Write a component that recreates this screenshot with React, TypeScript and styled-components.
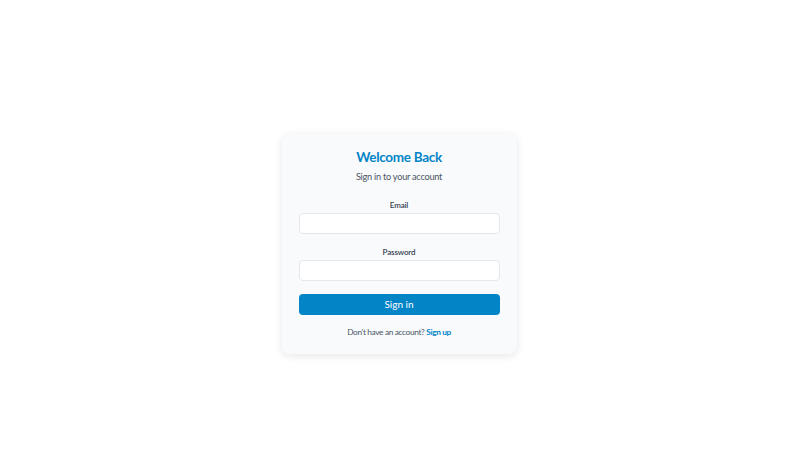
import styled, { createGlobalStyle } from 'styled-components'

const GlobalStyle = createGlobalStyle`
  * {
    box-sizing: border-box;
  }
  body {
    margin: 0;
    background: #ffffff;
    font-family: Lato, 'Open Sans', sans-serif;
    color: #374151;
  }
`

const Page = styled.div`
  min-height: 100vh;
  padding: 17px 24px 16px 16px;
  box-sizing: content-box;
  display: flex;
  align-items: center;
  justify-content: center;
`

const Card = styled.div`
  width: 235px;
  padding: 15px 17px 16px;
  background: #f8fafc;
  border-radius: 8px;
  box-shadow: 0 2px 8px rgba(15, 23, 42, 0.1);
  text-align: center;
`

const Title = styled.h1`
  margin: 0;
  font-size: 13.5px;
  line-height: 17px;
  font-weight: 700;
  letter-spacing: -0.3px;
  color: #0284c7;
`

const Subtitle = styled.p`
  margin: 5px 0 0;
  font-size: 9.2px;
  line-height: 12px;
  letter-spacing: -0.25px;
  color: #4b5563;
`

const Form = styled.form`
  margin-top: 17px;
  display: flex;
  flex-direction: column;
`

const Field = styled.div`
  display: flex;
  flex-direction: column;
  gap: 3px;
  margin-bottom: 13px;
`

const Label = styled.label`
  font-size: 8px;
  line-height: 10px;
  font-weight: 600;
  letter-spacing: -0.15px;
  color: #374151;
`

const Input = styled.input`
  height: 21px;
  width: 100%;
  border: 1px solid #e5e7eb;
  border-radius: 4px;
  background: #ffffff;
  font-family: inherit;
  font-size: 9px;
  padding: 0 8px;
  outline: none;
`

const Button = styled.button`
  height: 21.5px;
  width: 100%;
  border: none;
  border-radius: 4px;
  background: #0284c7;
  color: #ffffff;
  font-family: inherit;
  font-size: 10px;
  cursor: pointer;
`

const Footer = styled.p`
  margin: 11.5px 0 0;
  font-size: 8.3px;
  line-height: 11px;
  letter-spacing: -0.35px;
  color: #4b5563;
`

const FooterLink = styled.a`
  color: #0284c7;
  font-weight: 700;
  text-decoration: none;
`

export default function App() {
  return (
    <>
      <GlobalStyle />
      <Page>
        <Card>
          <Title>Welcome Back</Title>
          <Subtitle>Sign in to your account</Subtitle>
          <Form onSubmit={(e) => e.preventDefault()}>
            <Field>
              <Label htmlFor="email">Email</Label>
              <Input id="email" type="email" />
            </Field>
            <Field>
              <Label htmlFor="password">Password</Label>
              <Input id="password" type="password" />
            </Field>
            <Button type="submit">Sign in</Button>
          </Form>
          <Footer>
            Don't have an account? <FooterLink href="#">Sign up</FooterLink>
          </Footer>
        </Card>
      </Page>
    </>
  )
}
